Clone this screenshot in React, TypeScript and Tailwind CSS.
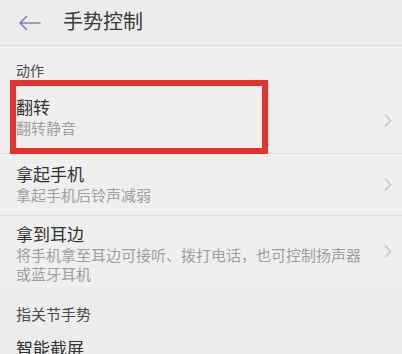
export default function App() {
  const font = { fontFamily: '"Noto Sans CJK SC", "Noto Sans", sans-serif' };
  return (
    <div className="relative w-[402px] h-[354px] overflow-hidden bg-[#efefef]" style={font}>
      {/* HEADER */}
      <div className="h-[46px] flex items-center border-b border-[#d9d9d9] bg-[#ececec]">
        <svg className="ml-[18px] w-[23px] h-[16px]" viewBox="0 0 23 16" fill="none">
          <path d="M22 8H2M8.5 1.5L2 8l6.5 6.5" stroke="#8582b0" strokeWidth={1.6} strokeLinecap="round" strokeLinejoin="round" />
        </svg>
        <h1 className="ml-[22px] text-[20px] leading-[24px] text-[#3a3a3a] -mt-[4px]">手势控制</h1>
      </div>

      {/* SECTION: 动作 */}
      <p className="px-4 pt-[15px] pb-[9px] text-[14px] leading-[18px] text-[#4a4a4a]">动作</p>

      <Row title="翻转" lines={['翻转静音']} pt="pt-[8px]" pb="pb-[16px]" />
      <Row title="拿起手机" lines={['拿起手机后铃声减弱']} pt="pt-[9px]" pb="pb-[11px]" />
      <Row
        title="拿到耳边"
        lines={['将手机拿至耳边可接听、拨打电话，也可控制扬声器', '或蓝牙耳机']}
        pt="pt-[7px]"
        pb="pb-[4px]"
        last
      />

      {/* SECTION: 指关节手势 */}
      <div className="bg-[#ececec]">
        <p className="px-4 pt-[18px] pb-[9px] text-[15px] leading-[18px] text-[#4a4a4a]">指关节手势</p>
        <p className="px-4 pt-[5px] text-[17px] leading-[22px] text-[#333333]">智能截屏</p>
      </div>

      {/* annotation box */}
      <div className="absolute left-[10px] top-[80px] w-[258px] h-[74px] border-[6px] border-[#e8302e]" />
    </div>
  );
}

function Row({
  title,
  lines,
  pt,
  pb,
  last = false,
}: {
  title: string;
  lines: string[];
  pt: string;
  pb: string;
  last?: boolean;
}) {
  return (
    <div className={`flex items-center pl-4 pr-[10px] ${last ? '' : 'border-b border-[#dedede]'}`}>
      <div className={`flex-1 ${pt} ${pb}`}>
        <p className="text-[17px] leading-[22px] text-[#333333]">{title}</p>
        {lines.map((l) => (
          <p key={l} className="text-[15px] leading-[19px] text-[#a0a0a0]">
            {l}
          </p>
        ))}
      </div>
      <svg className="w-[8px] h-[13px] ml-2" viewBox="0 0 8 13" fill="none">
        <path d="M1.5 1l5 5.5-5 5.5" stroke="#c6c6c6" strokeWidth={1.5} strokeLinecap="round" strokeLinejoin="round" />
      </svg>
    </div>
  );
}
